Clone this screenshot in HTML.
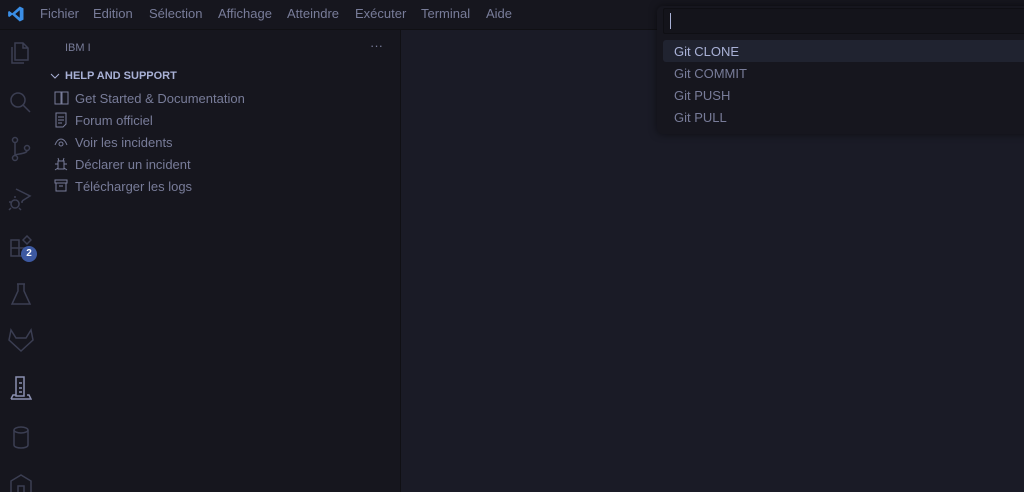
<!DOCTYPE html><html><head><meta charset="utf-8"><style>
*{margin:0;padding:0;box-sizing:border-box}
html,body{width:1024px;height:492px;overflow:hidden}
body{background:#1a1b26;font-family:"Liberation Sans",sans-serif;position:relative;color:#787c99}
.title{position:absolute;left:0;top:0;width:1024px;height:30px;background:#16161e;border-bottom:1px solid #101014}
.menu{position:absolute;top:6px;font-size:13px;color:#787c99}
.act{position:absolute;left:0;top:30px;width:40px;height:462px;background:#16161e}
.side{position:absolute;left:40px;top:30px;width:361px;height:462px;background:#16161e;border-right:1px solid #101014}
.item{position:absolute;left:35px;font-size:13px;color:#787c99}
.ic{position:absolute}
.qp{position:absolute;left:657px;top:6px;width:380px;height:128px;background:#16161e;border-radius:6px;box-shadow:0 0 8px rgba(0,0,0,.5)}
.inp{position:absolute;left:6px;top:2px;width:380px;height:26px;background:#14141b;border:1px solid #0f0f14;border-radius:2px}
.qi{position:absolute;left:17px;font-size:13px;color:#787c99}
</style></head><body>
<div class="title">
<svg class="ic" style="left:7px;top:5px" width="18" height="18" viewBox="0 0 24 24"><path d="M17 2 L22 4.5 V19.5 L17 22 L7 13 L3 16 L1.5 15 V9 L3 8 L7 11 L17 2 Z M17 7 L11 12 L17 17 Z" fill="#3a8ee6" fill-rule="evenodd"/></svg>
<span class="menu" style="left:40px">Fichier</span><span class="menu" style="left:93px">Edition</span><span class="menu" style="left:149px">Sélection</span><span class="menu" style="left:218px">Affichage</span><span class="menu" style="left:287px">Atteindre</span><span class="menu" style="left:355px">Exécuter</span><span class="menu" style="left:421px">Terminal</span><span class="menu" style="left:486px">Aide</span>
</div>
<div class="act">
<svg class="ic" style="left:8px;top:10px" width="24" height="26" viewBox="0 0 24 26" fill="none" stroke="#3b3e52" stroke-width="1.5"><path d="M7 3h8l5 5v12H7z M15 3v5h5 M4 7v16h12"/></svg>
<svg class="ic" style="left:8px;top:60px" width="24" height="24" viewBox="0 0 24 24" fill="none" stroke="#3b3e52" stroke-width="1.5"><circle cx="10" cy="10" r="7"/><path d="M15 15l7 7"/></svg>
<svg class="ic" style="left:10px;top:106px" width="22" height="26" viewBox="0 0 22 26" fill="none" stroke="#3b3e52" stroke-width="1.5"><circle cx="5" cy="4" r="2.5"/><circle cx="5" cy="22" r="2.5"/><circle cx="17" cy="12" r="2.5"/><path d="M5 6.5v13 M17 14.5c0 4-12 3-12 5"/></svg>
<svg class="ic" style="left:8px;top:156px" width="24" height="26" viewBox="0 0 24 26" fill="none" stroke="#3b3e52" stroke-width="1.5"><path d="M8 3l14 7-8 5 M7 14a4 4 0 1 0 0.1 0 M3 16h-2 M13 16h2 M3 22l-2 2 M11 22l2 2 M7 12v-2"/></svg>
<svg class="ic" style="left:10px;top:205px" width="22" height="22" viewBox="0 0 22 22" fill="none" stroke="#3b3e52" stroke-width="1.5"><path d="M1 5h8v16H1z M1 13h16v8H9 M13 5l4-4 4 4-4 4z"/></svg>
<div style="position:absolute;left:21px;top:216px;width:16px;height:16px;border-radius:50%;background:#3d59a1;color:#fff;font-size:10px;font-weight:bold;text-align:center;line-height:16px">2</div>
<svg class="ic" style="left:10px;top:252px" width="22" height="24" viewBox="0 0 22 24" fill="none" stroke="#3b3e52" stroke-width="1.5"><path d="M7 2h8 M8 2v7L2 22h18L14 9V2"/></svg>
<svg class="ic" style="left:8px;top:298px" width="26" height="26" viewBox="0 0 26 26" fill="none" stroke="#3b3e52" stroke-width="1.5"><path d="M3 2l5 8h10l5-8 2 10-12 11L1 12z"/></svg>
<svg class="ic" style="left:10px;top:346px" width="22" height="24" viewBox="0 0 22 24" fill="none" stroke="#8a8fb0" stroke-width="1.5"><path d="M6 1h8v19H6z M9 7h3 M9 12h3 M9 16h3 M1 23h20l-2-4h-2"/><path d="M1 23l2-4h3"/></svg>
<svg class="ic" style="left:11px;top:396px" width="20" height="24" viewBox="0 0 20 24" fill="none" stroke="#3b3e52" stroke-width="1.5"><ellipse cx="10" cy="4" rx="7" ry="3"/><path d="M3 4v15c0 4 14 4 14 0V4"/></svg>
<svg class="ic" style="left:9px;top:444px" width="24" height="22" viewBox="0 0 24 22" fill="none" stroke="#3b3e52" stroke-width="1.5"><path d="M12 1l10 6v15H2V7z M9 12h6v10H9z"/></svg>
</div>
<div class="side">
<div style="position:absolute;left:25px;top:12px;font-size:11px;color:#787c99">IBM I</div>
<div style="position:absolute;left:330px;top:8px;font-size:13px;color:#787c99">···</div>
<svg class="ic" style="left:10px;top:42px" width="10" height="8" viewBox="0 0 10 8" fill="none" stroke="#a9b1d6"><path d="M1 2l4 4 4-4"/></svg>
<div style="position:absolute;left:25px;top:40px;font-size:11px;font-weight:bold;color:#a9b1d6">HELP AND SUPPORT</div>
<svg class="ic" style="left:14px;top:61px" width="15" height="14" viewBox="0 0 15 14" fill="none" stroke="#787c99"><path d="M1 1h6v12H1z M8 1h6v12H8z"/></svg>
<div class="item" style="top:61px">Get Started &amp; Documentation</div>
<svg class="ic" style="left:15px;top:82px" width="12" height="16" viewBox="0 0 12 16" fill="none" stroke="#787c99"><path d="M1 1h10v11l-3 3H1z M3 5h6 M3 8h6 M3 11h4"/></svg>
<div class="item" style="top:83px">Forum officiel</div>
<svg class="ic" style="left:14px;top:107px" width="14" height="10" viewBox="0 0 14 10" fill="none" stroke="#787c99"><path d="M1 8c3-8 9-8 12 0"/><circle cx="7" cy="7" r="2"/></svg>
<div class="item" style="top:105px">Voir les incidents</div>
<svg class="ic" style="left:14px;top:126px" width="14" height="16" viewBox="0 0 14 16" fill="none" stroke="#787c99"><path d="M4 5h6v8H4z M5 5l-1-3 M9 5l1-3 M1 8h3 M10 8h3 M1 14l3-2 M13 14l-3-2"/></svg>
<div class="item" style="top:127px">Déclarer un incident</div>
<svg class="ic" style="left:14px;top:149px" width="14" height="13" viewBox="0 0 14 13" fill="none" stroke="#787c99"><path d="M1 1h12v3H1z M2 4v8h10V4 M5 7h4"/></svg>
<div class="item" style="top:149px">Télécharger les logs</div>
</div>
<div class="qp">
<div class="inp"><div style="position:absolute;left:6px;top:4px;width:1px;height:16px;background:#a9b1d6"></div></div>
<div style="position:absolute;left:6px;top:34px;width:380px;height:22px;background:#202330;border-radius:3px"></div>
<div class="qi" style="top:38px;color:#a9b1d6">Git CLONE</div>
<div class="qi" style="top:60px">Git COMMIT</div>
<div class="qi" style="top:82px">Git PUSH</div>
<div class="qi" style="top:104px">Git PULL</div>
</div>
</body></html>
